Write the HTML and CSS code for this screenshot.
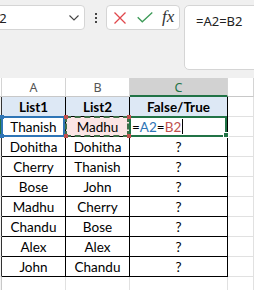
FILE: index.html
```html
<!DOCTYPE html>
<html>
  <head>
    <meta charset="utf-8" />
    <link rel="stylesheet" href="styles.css">
  </head>

  <body class="sheet-body">
    <div class="sheet-toolbar">
      <div class="sheet-namebox">
        <span class="sheet-namebox-text">C2</span>
        <svg class="sheet-namebox-chevron" width="10" height="6" viewBox="0 0 10 6">
          <path d="M0.5 0.5L5 5l4.5-4.5" fill="none" stroke="#444" stroke-width="1.1" />
        </svg>
      </div>

      <div class="sheet-dots">
        <span></span>
        <span></span>
        <span></span>
      </div>

      <div class="sheet-fx-buttons">
        <svg class="sheet-fx-cancel" width="12" height="12" viewBox="0 0 12 12">
          <path d="M0.5 0.5l11 11M11.5 0.5l-11 11" stroke="#e0474c" stroke-width="1.3" />
        </svg>
        <svg class="sheet-fx-enter" width="16" height="11" viewBox="0 0 16 11">
          <path d="M0.7 5.2l4.6 4.6L15.3 0.6" fill="none" stroke="#3c9a57" stroke-width="1.3" />
        </svg>
        <span class="sheet-fx-label">fx</span>
      </div>

      <div class="sheet-formula-bar">=A2=B2</div>
    </div>

    <div class="sheet-grid">
      <div class="sheet-cell sheet-corner"></div>
      <div class="sheet-cell sheet-col-head">A</div>
      <div class="sheet-cell sheet-col-head">B</div>
      <div class="sheet-cell sheet-col-head sheet-col-head-active">C</div>
      <div class="sheet-cell sheet-col-head sheet-col-head-last"></div>

      <div class="sheet-cell sheet-row-head sheet-row-head-table"></div>
      <div class="sheet-cell sheet-table sheet-table-head">List1</div>
      <div class="sheet-cell sheet-table sheet-table-head">List2</div>
      <div class="sheet-cell sheet-table sheet-table-head">False/True</div>
      <div class="sheet-cell"></div>

      <div class="sheet-cell sheet-row-head sheet-row-head-active"></div>
      <div class="sheet-cell sheet-table sheet-ref-blue">
        Thanish
        <i class="sheet-handle sheet-handle-blue sheet-handle-tl"></i>
        <i class="sheet-handle sheet-handle-blue sheet-handle-bl"></i>
      </div>
      <div class="sheet-cell sheet-table sheet-ref-red">
        Madhu
        <i class="sheet-handle sheet-handle-red sheet-handle-tl"></i>
        <i class="sheet-handle sheet-handle-red sheet-handle-tr"></i>
        <i class="sheet-handle sheet-handle-red sheet-handle-bl"></i>
        <i class="sheet-handle sheet-handle-red sheet-handle-br"></i>
      </div>
      <div class="sheet-cell sheet-table sheet-active">
        <span class="sheet-formula">=<span class="sheet-formula-blue">A2</span>=<span class="sheet-formula-red">B2</span></span><span class="sheet-caret"></span>
        <i class="sheet-fill-handle"></i>
      </div>
      <div class="sheet-cell"></div>

      <div class="sheet-cell sheet-row-head sheet-row-head-table"></div>
      <div class="sheet-cell sheet-table">Dohitha</div>
      <div class="sheet-cell sheet-table">Dohitha</div>
      <div class="sheet-cell sheet-table">?</div>
      <div class="sheet-cell"></div>

      <div class="sheet-cell sheet-row-head sheet-row-head-table"></div>
      <div class="sheet-cell sheet-table">Cherry</div>
      <div class="sheet-cell sheet-table">Thanish</div>
      <div class="sheet-cell sheet-table">?</div>
      <div class="sheet-cell"></div>

      <div class="sheet-cell sheet-row-head sheet-row-head-table"></div>
      <div class="sheet-cell sheet-table">Bose</div>
      <div class="sheet-cell sheet-table">John</div>
      <div class="sheet-cell sheet-table">?</div>
      <div class="sheet-cell"></div>

      <div class="sheet-cell sheet-row-head sheet-row-head-table"></div>
      <div class="sheet-cell sheet-table">Madhu</div>
      <div class="sheet-cell sheet-table">Cherry</div>
      <div class="sheet-cell sheet-table">?</div>
      <div class="sheet-cell"></div>

      <div class="sheet-cell sheet-row-head sheet-row-head-table"></div>
      <div class="sheet-cell sheet-table">Chandu</div>
      <div class="sheet-cell sheet-table">Bose</div>
      <div class="sheet-cell sheet-table">?</div>
      <div class="sheet-cell"></div>

      <div class="sheet-cell sheet-row-head sheet-row-head-table"></div>
      <div class="sheet-cell sheet-table">Alex</div>
      <div class="sheet-cell sheet-table">Alex</div>
      <div class="sheet-cell sheet-table">?</div>
      <div class="sheet-cell"></div>

      <div class="sheet-cell sheet-row-head sheet-row-head-table"></div>
      <div class="sheet-cell sheet-table">John</div>
      <div class="sheet-cell sheet-table">Chandu</div>
      <div class="sheet-cell sheet-table">?</div>
      <div class="sheet-cell"></div>

      <div class="sheet-cell sheet-row-head"></div>
      <div class="sheet-cell"></div>
      <div class="sheet-cell"></div>
      <div class="sheet-cell"></div>
      <div class="sheet-cell"></div>
    </div>
  </body>
</html>
```

FILE: styles.css
```css
:root {
  --toolbar-bg: #f0f0f0;
  --box-border: #d5d5d5;
  --grid-line: #e1e1e1;
  --excel-green: #217346;
  --ref-blue: #2e75b6;
  --ref-red: #c0504d;
  --cell-font: Lato, "Liberation Sans", sans-serif;
  --ui-font: "Noto Sans", "Open Sans", sans-serif;
}

.sheet-body {
  margin: 0;
  width: 254px;
  height: 290px;
  overflow: hidden;
  background: #fff;
  font-family: var(--cell-font);
}

/* toolbar: name box, buttons, formula bar */

.sheet-toolbar {
  display: flex;
  align-items: flex-start;
  height: 78px;
  padding-top: 5px;
  box-sizing: border-box;
  background: var(--toolbar-bg);
}

.sheet-namebox {
  display: flex;
  align-items: center;
  justify-content: space-between;
  box-sizing: border-box;
  width: 99px;
  height: 25px;
  margin-left: -14px;
  padding: 0 5px 0 4px;
  background: #fff;
  border: 1px solid var(--box-border);
  border-radius: 4px;
  font-family: var(--ui-font);
  font-size: 13px;
  color: #222;
}

.sheet-dots {
  display: flex;
  flex-direction: column;
  gap: 2px;
  margin: 8px 0 0 10px;
}

.sheet-dots > span {
  width: 2px;
  height: 2px;
  background: #444;
}

.sheet-fx-buttons {
  display: flex;
  align-items: center;
  box-sizing: border-box;
  width: 74px;
  height: 25px;
  margin-left: 9px;
  padding-left: 7px;
  background: #fff;
  border: 1px solid var(--box-border);
  border-radius: 4px;
}

.sheet-fx-enter {
  margin-left: 11px;
}

.sheet-fx-label {
  margin-left: 9px;
  margin-top: -2px;
  font-family: "Liberation Serif", serif;
  font-style: italic;
  font-size: 17px;
  color: #333;
}

.sheet-formula-bar {
  flex: 1;
  box-sizing: border-box;
  height: 65px;
  margin-left: 4px;
  margin-right: -10px;
  padding: 6px 0 0 11px;
  background: #fff;
  border: 1px solid var(--box-border);
  border-radius: 5px;
  font-family: var(--ui-font);
  font-size: 13px;
  color: #222;
}

/* grid */

.sheet-grid {
  display: grid;
  grid-template-columns: 2px 64px 64px 98px 1fr;
  grid-template-rows: 19px;
  grid-auto-rows: 20px;
}

.sheet-cell {
  position: relative;
  display: flex;
  align-items: center;
  justify-content: center;
  box-sizing: border-box;
  border-right: 1px solid var(--grid-line);
  border-bottom: 1px solid var(--grid-line);
  font-size: 13.5px;
  color: #000;
}

.sheet-corner,
.sheet-col-head {
  background: #fff;
  border-right-color: #d4d4d4;
  border-bottom-color: #c8c8c8;
}

.sheet-col-head {
  font-family: var(--ui-font);
  font-size: 12.5px;
  color: #555;
  padding-top: 1px;
}

.sheet-col-head-active {
  background: #d2d2d2;
  color: var(--excel-green);
  border-bottom: 2px solid var(--excel-green);
}

.sheet-row-head {
  background: #f3f3f3;
  border-right-color: #c8c8c8;
}

.sheet-row-head-table {
  border-right-color: #333;
}

.sheet-row-head-active {
  background: var(--excel-green);
  border-right-color: var(--excel-green);
}

.sheet-table {
  border-right-color: #000;
  border-bottom-color: #000;
}

.sheet-table-head {
  background: #dde8f5;
  font-weight: bold;
}

/* range references while editing */

.sheet-ref-blue::after,
.sheet-ref-red::after,
.sheet-active::after {
  content: "";
  position: absolute;
  top: -1px;
  left: -1px;
  right: 0;
  bottom: -1px;
  border: 2px solid var(--ref-blue);
  pointer-events: none;
}

.sheet-ref-red {
  background: #fbe5e5;
}

.sheet-ref-red::after {
  border: 2px dashed #3f6e48;
}

.sheet-active {
  justify-content: flex-start;
  padding-left: 2px;
}

.sheet-active::after {
  border-color: var(--excel-green);
}

.sheet-formula-blue {
  color: var(--ref-blue);
}

.sheet-formula-red {
  color: var(--ref-red);
}

.sheet-caret {
  width: 1px;
  height: 15px;
  margin-left: 1px;
  background: #000;
}

.sheet-handle {
  position: absolute;
  z-index: 1;
  width: 4px;
  height: 4px;
}

.sheet-handle-blue {
  background: var(--ref-blue);
}

.sheet-handle-red {
  background: var(--ref-red);
}

.sheet-handle-tl {
  top: -2px;
  left: -2px;
}

.sheet-handle-tr {
  top: -2px;
  right: -2px;
}

.sheet-handle-bl {
  bottom: -2px;
  left: -2px;
}

.sheet-handle-br {
  bottom: -2px;
  right: -2px;
}

.sheet-fill-handle {
  position: absolute;
  z-index: 1;
  right: -2px;
  bottom: -2px;
  width: 4px;
  height: 4px;
  background: var(--excel-green);
  border: 1px solid #fff;
}
```
